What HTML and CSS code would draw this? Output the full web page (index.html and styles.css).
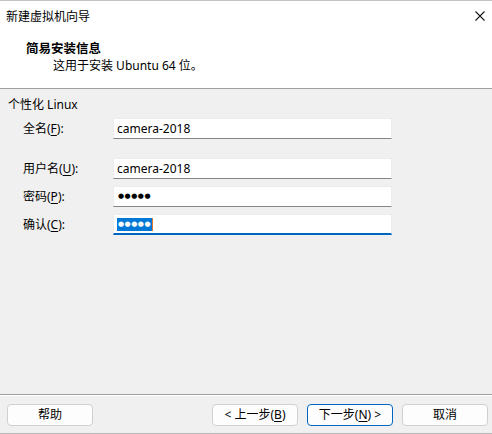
FILE: index.html
```html
<!DOCTYPE html>
<html lang="zh-CN">
<head>
<meta charset="utf-8">
<title>新建虚拟机向导</title>
<link rel="stylesheet" href="styles.css">
</head>
<body>
<div class="window">
  <div class="header">
    <div class="titlebar">
      <span class="title">新建虚拟机向导</span>
      <svg class="close" width="10" height="10" viewBox="0 0 10 10"><path d="M0.5 0.5 L9.5 9.5 M9.5 0.5 L0.5 9.5" stroke="#1a1a1a" stroke-width="1.1" fill="none"/></svg>
    </div>
    <div class="heading">简易安装信息</div>
    <div class="subheading">这用于安装 Ubuntu 64 位。</div>
  </div>
  <div class="content">
    <div class="group-title">个性化 Linux</div>
    <div class="form">
      <div class="row r1">
        <label class="label">全名(<u>F</u>):</label>
        <div class="field"><span class="value">camera-2018</span></div>
      </div>
      <div class="row r2">
        <label class="label">用户名(<u>U</u>):</label>
        <div class="field"><span class="value">camera-2018</span></div>
      </div>
      <div class="row r3">
        <label class="label">密码(<u>P</u>):</label>
        <div class="field"><span class="dots">●●●●●</span></div>
      </div>
      <div class="row r3">
        <label class="label">确认(<u>C</u>):</label>
        <div class="field focused"><span class="dots selected">●●●●●</span><span class="caret"></span></div>
      </div>
    </div>
  </div>
  <div class="footer">
    <button class="btn">帮助</button>
    <div class="spacer"></div>
    <button class="btn">&lt; 上一步(<u>B</u>)</button>
    <button class="btn default">下一步(<u>N</u>) &gt;</button>
    <button class="btn">取消</button>
  </div>
</div>
</body>
</html>
```
FILE: styles.css
```css
html, body {
  margin: 0;
  padding: 0;
  background: #f0f0f0;
}
body {
  font-family: "Noto Sans", "Noto Sans CJK SC", sans-serif;
  font-size: 12px;
  color: #000;
}
.window {
  width: 492px;
  height: 434px;
  box-sizing: border-box;
  border-top: 1px solid #c4c4c4;
  border-bottom: 1px solid #b8b8b8;
  display: flex;
  flex-direction: column;
  background: #f0f0f0;
}
.header {
  height: 87px;
  background: #ffffff;
  border-bottom: 1px solid #a0a0a0;
  box-sizing: content-box;
}
.titlebar {
  height: 30px;
  display: flex;
  align-items: center;
  justify-content: space-between;
  padding: 0 7px 0 6px;
}
.title {
  line-height: 16px;
  font-family: "Noto Sans CJK SC", sans-serif;
  margin-top: 0px;
}
.close {
  margin-right: 0;
}
.heading {
  font-family: "Noto Sans CJK SC", sans-serif;
  font-weight: bold;
  font-size: 12.5px;
  line-height: 16px;
  margin: 9px 0 0 26px;
}
.subheading {
  line-height: 16px;
  margin: 2px 0 0 53px;
}
.content {
  flex: 1;
  padding: 9px 0 0 8px;
}
.group-title {
  line-height: 14px;
}
.form {
  display: flex;
  flex-direction: column;
  padding-left: 15px;
}
.row {
  display: flex;
  align-items: center;
  height: 21px;
}
.r1 { margin-top: 6px; }
.r2 { margin-top: 19px; }
.r3 { margin-top: 7px; }
.label {
  width: 90px;
  line-height: 16px;
}
.label u {
  text-underline-offset: 2px;
}
.field {
  width: 279px;
  height: 21px;
  box-sizing: border-box;
  background: #ffffff;
  border: 1px solid #ececec;
  border-bottom: 1px solid #858585;
  display: flex;
  align-items: center;
  padding-left: 3px;
}
.field.focused {
  border-bottom: 2px solid #0067c0;
  padding-top: 1px;
}
.value {
  line-height: 16px;
}
.dots {
  font-family: "DejaVu Sans", sans-serif;
  font-size: 7px;
  letter-spacing: 0.5px;
  line-height: 13px;
  padding: 0 1px;
}
.dots.selected {
  background: #0078d7;
  color: #ffffff;
}
.caret {
  width: 1px;
  height: 13px;
  background: #e07a2a;
}
.footer {
  height: 39px;
  border-top: 1px solid #a0a0a0;
  box-shadow: inset 0 1px 0 #ffffff;
  display: flex;
  align-items: flex-start;
  gap: 9px;
  padding: 9px 4px 0 7px;
  box-sizing: border-box;
}
.spacer {
  flex: 1;
}
.btn {
  width: 86px;
  height: 22px;
  margin: 0;
  padding: 0;
  box-sizing: border-box;
  background: #fdfdfd;
  border: 1px solid #d0d0d0;
  border-radius: 4px;
  font-family: "Noto Sans", "Noto Sans CJK SC", sans-serif;
  font-size: 12px;
  color: #000;
  line-height: 18px;
}
.btn.default {
  border-color: #0067c0;
}
.btn u {
  text-underline-offset: 2px;
}
```
